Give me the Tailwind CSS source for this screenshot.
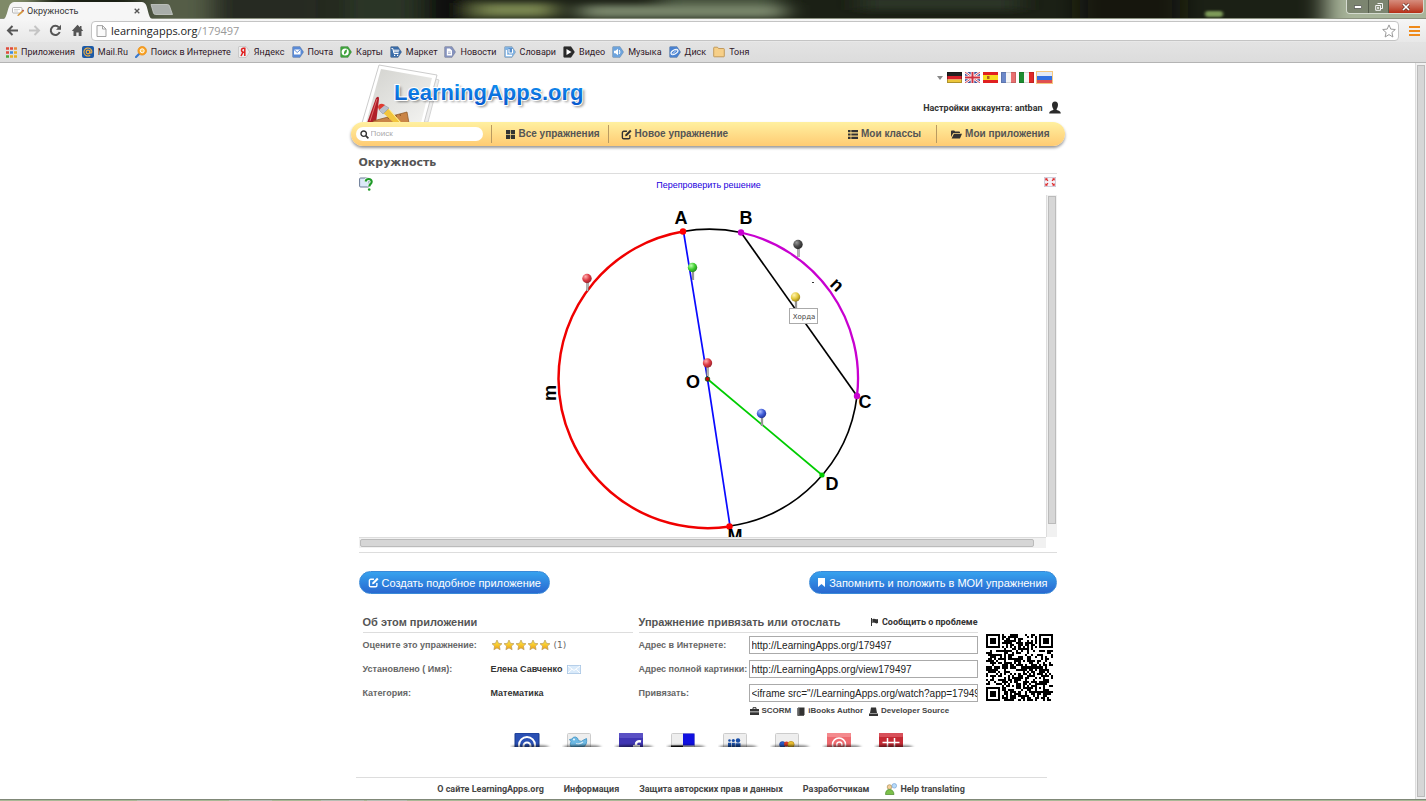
<!DOCTYPE html>
<html lang="ru">
<head>
<meta charset="utf-8">
<title>Окружность</title>
<script src="https://cdn.jsdelivr.net/npm/@tailwindcss/browser@4"></script>
</head>
<body class="h-screen flex flex-col overflow-hidden bg-white font-['Liberation_Sans',Arial,sans-serif] text-[9px] leading-3 text-[#444]">

<svg width="0" height="0" class="absolute" aria-hidden="true">
  <defs>
    <linearGradient id="starFill" x1="0" y1="0" x2="0" y2="1"><stop offset="0" stop-color="#fff04a"/><stop offset="1" stop-color="#f0a010"/></linearGradient>
    <filter id="soft" x="-20%" y="-100%" width="140%" height="300%"><feGaussianBlur stdDeviation="12 3"/></filter>
    <filter id="soft1" x="-20%" y="-50%" width="140%" height="200%"><feGaussianBlur stdDeviation="1.5 .8"/></filter>
    <radialGradient id="ballRed" cx=".35" cy=".3" r=".8"><stop offset="0" stop-color="#ffb0b0"/><stop offset=".5" stop-color="#dd3a44"/><stop offset="1" stop-color="#8a2028"/></radialGradient>
    <radialGradient id="ballGreen" cx=".35" cy=".3" r=".8"><stop offset="0" stop-color="#c0ffb0"/><stop offset=".5" stop-color="#3fcf30"/><stop offset="1" stop-color="#1f7a1c"/></radialGradient>
    <radialGradient id="ballBlack" cx=".35" cy=".3" r=".8"><stop offset="0" stop-color="#999"/><stop offset=".5" stop-color="#4a4a4a"/><stop offset="1" stop-color="#222"/></radialGradient>
    <radialGradient id="ballYellow" cx=".35" cy=".3" r=".8"><stop offset="0" stop-color="#fff3b0"/><stop offset=".5" stop-color="#e3c83c"/><stop offset="1" stop-color="#8a7418"/></radialGradient>
    <radialGradient id="ballBlue" cx=".35" cy=".3" r=".8"><stop offset="0" stop-color="#b0c0ff"/><stop offset=".5" stop-color="#3f5cd8"/><stop offset="1" stop-color="#1c2c88"/></radialGradient>
    <symbol id="tagShape" viewBox="0 0 12 12"><path d="M1.500 .5H8L11.700 6 8 11.500H1.500a1 1 0 0 1-1-1V1.500a1 1 0 0 1 1-1z" stroke="#00000033" stroke-width=".6"/></symbol>
    <symbol id="star" viewBox="0 0 12 12"><path d="M6 1l1.500 3.300 3.500.4-2.600 2.400.7 3.600L6 8.900l-3.100 1.800.7-3.600L1 4.700l3.500-.4z" fill="url(#starFill)" stroke="#b99a5a" stroke-width=".7"/></symbol>
    <symbol id="edit" viewBox="0 0 12 12"><path d="M9.700 6.500V9.200a1.500 1.500 0 0 1-1.500 1.500H3A1.500 1.500 0 0 1 1.500 9.200V4A1.500 1.500 0 0 1 3 2.500h3.500" fill="none" stroke="currentColor" stroke-width="1.500"/><path d="M4.500 8l.3-2.100L9.900.8l1.600 1.600-5.100 5.200z" fill="currentColor"/></symbol>
  </defs>
</svg>

<!-- Window title bar with tab -->
<header class="relative h-[19px] shrink-0 flex bg-[#1b2015] overflow-hidden">
  <svg class="absolute inset-0 size-full" viewBox="0 0 1426 19" preserveAspectRatio="none" aria-hidden="true">
    <g filter="url(#soft)">
      <rect x="-40" y="-15" width="80" height="50" fill="#7f8a68"/>
      <rect x="140" y="-15" width="80" height="50" fill="#545d46"/>
      <rect x="210" y="-15" width="120" height="50" fill="#272c22"/>
      <rect x="340" y="-15" width="80" height="50" fill="#2c3428"/>
      <rect x="430" y="-15" width="40" height="50" fill="#0c1008"/>
      <rect x="475" y="3" width="80" height="14" fill="#78844f"/>
      <rect x="580" y="5" width="205" height="13" fill="#78856a"/>
      <rect x="660" y="-4" width="120" height="10" fill="#4c5842"/>
      <rect x="860" y="-4" width="160" height="14" fill="#2b3426"/>
      <rect x="1080" y="-15" width="100" height="50" fill="#141910"/>
      <rect x="1325" y="-15" width="150" height="50" fill="#a8b49a"/>
    </g>
    <rect x="1205" y="11" width="18" height="6" rx="3" fill="#7d9a58" filter="url(#soft1)"/>
    <rect y="18" width="1426" height="1" fill="#8a917f"/>
  </svg>
  <div class="relative ml-1 mt-0.5 w-[148px] h-[17px] flex items-center pl-2 pr-3 gap-[3px]">
    <svg class="absolute inset-0 size-full" viewBox="0 0 148 17" preserveAspectRatio="none"><path d="M0 17C3 16 4 3 7 1.500Q8 0 10 0H138Q140 0 141 1.500C144 4 144 16 148 17z" fill="#f6f6f6"/></svg>
    <svg class="relative size-3" viewBox="0 0 12 12"><rect x=".5" y="2.500" width="9.500" height="5.500" rx="1" fill="#fff" stroke="#999" stroke-width=".7"/><path d="M2 4.500h6M2 6h4" stroke="#bbb" stroke-width=".6"/><path d="M5 10.500l5-5 1.500 1.200-5 4.300z" fill="#d79a3c"/><path d="M10 5.500l1-1 1 1-.7 1.200z" fill="#b04030"/></svg>
    <h2 class="relative text-[9px] text-[#333] font-['Roboto',sans-serif]">Окружность</h2>
    <button class="relative ml-auto text-[#555]" aria-label="Закрыть вкладку"><svg class="size-1.5" viewBox="0 0 6 6"><path d="M.7.7l4.600 4.600M5.300.7L.7 5.300" stroke="currentColor" stroke-width="1.300"/></svg></button>
  </div>
  <button class="relative self-start mt-1 -ml-0.5" aria-label="Новая вкладка"><svg class="w-[23px] h-[11px]" viewBox="0 0 23 11"><path d="M1 .5H17.500q1.500 0 2 1.500L22.500 10.500H5.500Q4 10.500 3.500 9z" fill="#a9aeaa" stroke="#c9cdc9" stroke-width=".8"/></svg></button>
  <div class="relative ml-auto mr-0.5 h-[14px] flex rounded-b border border-t-0 border-[#d5dbd0] overflow-hidden">
    <button class="w-[22px] bg-[#7c8570] border-r border-[#555d4d] flex justify-center items-center" aria-label="Свернуть"><svg class="w-2 h-1" viewBox="0 0 8 4"><rect x=".4" y=".7" width="7.200" height="2.600" fill="#fff" stroke="#444" stroke-width=".6"/></svg></button>
    <button class="w-[20px] bg-[#7c8570] border-r border-[#555d4d] flex justify-center items-center" aria-label="Развернуть"><svg class="size-2" viewBox="0 0 8 8"><path d="M2.500.5h5v5h-2M.7 2.500h4.800v4.800H.7zM2.500 4.300h1.200v1.200H2.500z" fill="none" stroke="#f5f5f5" stroke-width="1"/></svg></button>
    <button class="w-[34px] bg-linear-to-b from-[#d68d7d] to-[#b52c12] flex justify-center items-center" aria-label="Закрыть"><svg class="size-2" viewBox="0 0 8 8"><path d="M1 1l6 6M7 1L1 7" stroke="#5a2a20" stroke-width="2.800"/><path d="M1 1l6 6M7 1L1 7" stroke="#fff" stroke-width="1.700"/></svg></button>
  </div>
</header>

<!-- Address bar -->
<div class="h-[23px] shrink-0 bg-linear-to-b from-[#f6f6f6] to-[#e8e8e8] flex items-center pl-1.5 pr-1.5">
  <button class="text-[#555]" aria-label="Назад"><svg class="size-[13px]" viewBox="0 0 13 13"><path d="M6.500 2L2 6.500 6.500 11M2.500 6.500H12" fill="none" stroke="currentColor" stroke-width="2"/></svg></button>
  <button class="ml-[9px] text-[#c4c4c4]" aria-label="Вперёд"><svg class="size-[13px]" viewBox="0 0 13 13"><path d="M6.500 2L11 6.500 6.500 11M10.500 6.500H1" fill="none" stroke="currentColor" stroke-width="2"/></svg></button>
  <button class="ml-2 text-[#555]" aria-label="Обновить"><svg class="size-[13px]" viewBox="0 0 13 13"><path d="M10.700 8A4.600 4.600 0 1 1 9.800 3.300" fill="none" stroke="currentColor" stroke-width="2"/><path d="M12 .8v5H7z" fill="currentColor"/></svg></button>
  <button class="ml-[9px] text-[#555]" aria-label="Домой"><svg class="size-[13px]" viewBox="0 0 13 13"><path d="M6.500.8L.8 7h1.700v5h2.800V8.500h2.400V12h2.800V7h1.700L10.500 4.800V2H9v1.300z" fill="currentColor"/></svg></button>
  <label class="ml-[7px] flex-1 h-5 bg-white border border-[#c4c4c4] rounded-sm flex items-center pl-1 pr-0.5">
    <svg class="w-[11px] h-3" viewBox="0 0 11 12"><path d="M1 .6h5.500L10 4v7.500H1zM6.500.6V4H10" fill="#fafafa" stroke="#999" stroke-width=".9"/></svg>
    <span class="ml-1 flex-1 text-[11px] font-['Open_Sans',sans-serif] text-[#222]">learningapps.org<span class="text-[#999]">/179497</span></span>
    <svg class="size-[14px]" viewBox="0 0 14 14"><path d="M7 .9l1.800 4.200 4.500.4-3.400 3 1 4.500L7 10.600 3.100 13l1-4.500-3.400-3 4.500-.4z" fill="#fff" stroke="#999"/></svg>
  </label>
  <button class="ml-[10px]" aria-label="Меню"><svg class="w-[11px] h-3" viewBox="0 0 11 12"><path d="M0 2h11M0 6h11M0 10h11" stroke="#ef8a1a" stroke-width="2.200"/></svg></button>
</div>

<!-- Bookmarks -->
<nav class="h-[21px] shrink-0 bg-linear-to-b from-[#e3e3e3] to-[#dcdcdc] border-b border-[#b4b4b4] flex items-center gap-[7px] pl-1.5 text-[9px] text-[#301828] font-['Roboto',sans-serif]" aria-label="Закладки">
  <a href="#" class="flex items-center gap-1"><svg class="size-[11px]" viewBox="0 0 11 11"><path d="M0 1.500h3M0 5.500h3" stroke="#e04a3a" stroke-width="2.500"/><path d="M4 1.500h3" stroke="#e04a3a" stroke-width="2.500"/><path d="M8 1.500h3" stroke="#e88a3a" stroke-width="2.500"/><path d="M4 5.500h3" stroke="#3a8ae0" stroke-width="2.500"/><path d="M8 5.500h3M4 9.500h3M8 9.500h3" stroke="#e8b020" stroke-width="2.500"/><path d="M0 9.500h3" stroke="#4aa83a" stroke-width="2.500"/></svg>Приложения</a>
  <a href="#" class="flex items-center gap-1"><svg class="size-3" viewBox="0 0 12 12"><rect width="12" height="12" rx="2" fill="#1d5aa6"/><circle cx="6" cy="6" r="1.800" fill="none" stroke="#f5b040" stroke-width="1.200"/><path d="M7.900 4v2.600q1.600 1.200 2-.6A4 4 0 1 0 8.200 9.300" fill="none" stroke="#f5b040" stroke-width="1.100"/></svg>Mail.Ru</a>
  <a href="#" class="flex items-center gap-1"><svg class="size-3" viewBox="0 0 12 12"><path d="M1 11l3-3" stroke="#3a7ad0" stroke-width="2.200" stroke-linecap="round"/><circle cx="7.200" cy="4.800" r="4.300" fill="#f9a020" stroke="#e88a10" stroke-width=".7"/><circle cx="7.200" cy="4.800" r="2" fill="#fbc860" stroke="#fff"/></svg>Поиск в Интернете</a>
  <a href="#" class="flex items-center gap-1"><svg class="size-3" viewBox="0 0 12 12"><use href="#tagShape" fill="#ececec"/><path d="M6.800 10V2.200H5.500a1.800 1.800 0 0 0 0 4h1.300M5 6.200L3 10" fill="none" stroke="#e02020" stroke-width="1.500"/></svg>Яндекс</a>
  <a href="#" class="flex items-center gap-1"><svg class="size-3" viewBox="0 0 12 12"><use href="#tagShape" fill="#5a8ad6"/><path d="M2 3.500h6.500v5H2z" fill="#fff"/><path d="M2 3.500l3.200 3 3.300-3" fill="none" stroke="#5a8ad6"/></svg>Почта</a>
  <a href="#" class="flex items-center gap-1"><svg class="size-3" viewBox="0 0 12 12"><use href="#tagShape" fill="#3fa33c"/><circle cx="5.200" cy="6" r="3.600" fill="#fff"/><path d="M4 8.500Q3.500 4 7 3.500 7.200 7.500 4 8.500z" fill="#3fa33c"/></svg>Карты</a>
  <a href="#" class="flex items-center gap-1"><svg class="size-3" viewBox="0 0 12 12"><use href="#tagShape" fill="#3a6ca8"/><path d="M1.500 2.500h1.300L4 7.500h4.500M3.500 4.200h5.800M3.800 5.800h5" fill="none" stroke="#fff"/><path d="M4 9.300h1.200M7 9.300h1.200" stroke="#fff" stroke-width="1.200"/></svg>Маркет</a>
  <a href="#" class="flex items-center gap-1"><svg class="size-3" viewBox="0 0 12 12"><use href="#tagShape" fill="#8592bd"/><path d="M2.800 2.500h3L8 4.500v5H2.800z" fill="#fff"/><path d="M4 6h2.800M4 7.500h2.800" stroke="#8592bd" stroke-width=".7"/></svg>Новости</a>
  <a href="#" class="flex items-center gap-1"><svg class="size-3" viewBox="0 0 12 12"><use href="#tagShape" fill="#82b3e2"/><path d="M4.500 2h4v5.500h-4z" fill="#5a90cc"/><path d="M2.500 4v5.500H8" fill="none" stroke="#fff" stroke-width="1.300"/><path d="M5 3v4h3.500V3" fill="none" stroke="#fff"/></svg>Словари</a>
  <a href="#" class="flex items-center gap-1"><svg class="size-3" viewBox="0 0 12 12"><use href="#tagShape" fill="#2a2a2a"/><path d="M3.500 3l5 3-5 3z" fill="#fff"/></svg>Видео</a>
  <a href="#" class="flex items-center gap-1"><svg class="size-3" viewBox="0 0 12 12"><use href="#tagShape" fill="#6da3dc"/><path d="M2 4.700h1.500L6 2.800v6.400L3.500 7.300H2z" fill="#fff"/><path d="M7.200 4q1.500 2 0 4" fill="none" stroke="#fff"/></svg>Музыка</a>
  <a href="#" class="flex items-center gap-1"><svg class="size-3" viewBox="0 0 12 12"><use href="#tagShape" fill="#4a82d0"/><ellipse cx="5.500" cy="6" rx="3.800" ry="2" transform="rotate(-30 5.500 6)" fill="none" stroke="#fff" stroke-width="1.100"/><path d="M3 8.500l5-5" stroke="#cfe2ff"/></svg>Диск</a>
  <a href="#" class="flex items-center gap-1"><svg class="size-3" viewBox="0 0 12 12"><path d="M.7 3V2q0-.8.8-.8h3L5.500 2.500h5q.8 0 .8.800v6.900q0 .6-.6.600H1.300q-.6 0-.6-.6z" fill="#f6cf88" stroke="#b88a45" stroke-width=".8"/></svg>Тоня</a>
</nav>

<!-- Page viewport -->
<div class="flex-1 min-h-0 flex">
  <div class="flex-1 min-w-0 overflow-hidden flex flex-col">
    <div class="w-full max-w-[698px] mx-auto flex flex-col">

      <div class="h-[59px] flex justify-between items-start">
        <a href="#" class="relative block" aria-label="LearningApps.org">
          <svg class="w-[240px] h-[59px]" viewBox="359 63 240 59">
            <defs><linearGradient id="logoText" gradientUnits="userSpaceOnUse" x1="0" y1="82" x2="0" y2="106"><stop offset="0" stop-color="#1193f2"/><stop offset="1" stop-color="#0756cc"/></linearGradient>
            <linearGradient id="paper" x1="0" y1="0" x2="1" y2="1"><stop offset="0" stop-color="#d2d2ce"/><stop offset="1" stop-color="#f4f4f2"/></linearGradient></defs>
            <path d="M436 79l3 1-11 42h-6z" fill="#eee" stroke="#ccc" stroke-width=".8"/>
            <path d="M379 65l58 10-13 48-62 0z" fill="#fff" stroke="#ccc"/>
            <path d="M381 69l51 9-11 45h-55z" fill="url(#paper)"/>
            <path d="M376 98q3-3 3 1l-3 24h-9z" fill="#b01e28"/><path d="M377 99l-7 22" stroke="#e06a6a"/>
            <path d="M373 121l34-9 2 11h-36z" fill="#c98547" stroke="#8a5420" stroke-width=".7"/>
            <path d="M388 117l.5 2M392 116l.5 2M396 115l.5 2M400 114l.5 2" stroke="#7a4818" stroke-width=".7"/>
            <path d="M387 107l14 15h-8l-11-10z" fill="#f2c53d"/><path d="M388 108l12 14" stroke="#fff0a0"/>
            <path d="M384 105l-5 5 4 4 6-6z" fill="#b9c0cc" stroke="#8890a0" stroke-width=".5"/><path d="M378 107q1-4 5-3l2 1-6 5z" fill="#e03a30"/>
            <text x="396" y="102" font-family="Liberation Sans" font-weight="700" font-size="22" fill="#00000077" filter="url(#soft1)">LearningApps.org</text>
            <text x="394" y="100" font-family="Liberation Sans" font-weight="700" font-size="22" fill="url(#logoText)" stroke="#fff" stroke-width="2" paint-order="stroke">LearningApps.org</text>
          </svg>
        </a>
        <div class="flex flex-col items-end pt-2">
          <div class="flex items-center gap-[3px] pr-1">
            <svg class="w-[6px] h-1 mr-px" viewBox="0 0 6 4"><path d="M0 0h6L3 4z" fill="#888"/></svg>
            <a href="#" aria-label="Deutsch"><svg class="w-[15px] h-[11px]" viewBox="0 0 15 11"><rect width="15" height="4" fill="#222"/><rect y="4" width="15" height="3.500" fill="#d8202a"/><rect y="7.500" width="15" height="3.500" fill="#ecc63a"/><rect x=".5" y=".5" width="14" height="10" fill="none" stroke="#0004"/></svg></a>
            <a href="#" aria-label="English"><svg class="w-[15px] h-[11px]" viewBox="0 0 15 11"><rect width="15" height="11" fill="#3a4f9c"/><path d="M0 0l15 11M15 0L0 11" stroke="#fff" stroke-width="2.600"/><path d="M0 0l15 11M15 0L0 11" stroke="#d03040" stroke-width=".9"/><path d="M7.500 0v11M0 5.500h15" stroke="#fff" stroke-width="3.600"/><path d="M7.500 0v11M0 5.500h15" stroke="#d03040" stroke-width="2"/></svg></a>
            <a href="#" aria-label="Español"><svg class="w-[15px] h-[11px]" viewBox="0 0 15 11"><rect width="15" height="11" fill="#e02020"/><rect y="3" width="15" height="5" fill="#f8dc20"/><rect x="4" y="4" width="2.500" height="3" fill="#b06020"/></svg></a>
            <a href="#" aria-label="Français"><svg class="w-[15px] h-[11px]" viewBox="0 0 15 11"><rect width="5" height="11" fill="#6c88c8"/><rect x="5" width="5" height="11" fill="#f6f6f6"/><rect x="10" width="5" height="11" fill="#e87070"/><rect x=".5" y=".5" width="14" height="10" fill="none" stroke="#0002"/></svg></a>
            <a href="#" aria-label="Italiano"><svg class="w-[15px] h-[11px]" viewBox="0 0 15 11"><rect width="5" height="11" fill="#1c8c30"/><rect x="5" width="5" height="11" fill="#f6f6f6"/><rect x="10" width="5" height="11" fill="#e02828"/><rect x=".5" y=".5" width="14" height="10" fill="none" stroke="#0002"/></svg></a>
            <a href="#" aria-label="Русский" class="border border-[#f5c880] -ml-px"><svg class="w-[15px] h-[11px]" viewBox="0 0 15 11"><rect width="15" height="4" fill="#e4eaf6"/><rect y="4" width="15" height="4" fill="#3470e0"/><rect y="8" width="15" height="3" fill="#e05050"/></svg></a>
          </div>
          <a href="#" class="mt-[17px] flex items-center gap-1.5 font-bold text-[#333] text-[9px] font-['Roboto',sans-serif] -mr-1">Настройки аккаунта: antban
            <svg class="w-3 h-[13px]" viewBox="0 0 12 13"><path d="M6 .5c2 0 3 1.300 3 3.200S8 7.500 7.600 8v.8c.6.800 4.200.9 4.200 3.700H.2C.2 9.700 3.800 9.600 4.400 8.800V8C4 7.500 3 5.600 3 3.700S4 .5 6 .5z" fill="#2a2a2a"/></svg>
          </a>
        </div>
      </div>

      <nav class="-mx-2 h-6 rounded-full bg-linear-to-b from-[#fff0a0] to-[#ffcb72] shadow-[0_2px_3px_#0006] flex items-center pl-[5px] pr-[15px] text-[10px] font-bold text-[#555]" aria-label="Главное меню">
        <label class="w-[127px] h-3.5 bg-white rounded-full flex items-center pl-1 gap-0.5">
          <svg class="size-[9px] shrink-0" viewBox="0 0 9 9"><circle cx="3.700" cy="3.700" r="2.700" fill="none" stroke="#333" stroke-width="1.400"/><path d="M5.700 5.700l2.700 2.700" stroke="#333" stroke-width="1.700"/></svg>
          <input type="text" placeholder="Поиск" aria-label="Поиск" class="w-full min-w-0 text-[8px] font-normal outline-none placeholder:text-[#aaa]">
        </label>
        <span class="ml-2 w-px h-[18px] bg-[#b99a60]"></span>
        <a href="#" class="ml-3.5 flex items-center gap-1"><svg class="size-[9px]" viewBox="0 0 9 9"><path d="M0 0h4.200v4H0zM4.900 0H9v4H4.900zM0 4.700h4.200V9H0zM4.900 4.700H9V9H4.900z" fill="#333"/></svg>Все упражнения</a>
        <span class="ml-2 w-px h-[18px] bg-[#b99a60]"></span>
        <a href="#" class="ml-3 flex items-center gap-[3px]"><svg class="size-[11px] text-[#333]" viewBox="0 0 12 12"><use href="#edit"/></svg>Новое упражнение</a>
        <a href="#" class="ml-auto flex items-center gap-[3px]"><svg class="w-[10px] h-[9px]" viewBox="0 0 9 8"><path d="M0 0h2.300v2H0zM3 0h6v2H3zM0 3h2.300v2H0zM3 3h6v2H3zM0 6h2.300v2H0zM3 6h6v2H3z" fill="#333"/></svg>Мои классы</a>
        <span class="ml-[15px] w-px h-[18px] bg-[#b99a60]"></span>
        <a href="#" class="ml-3.5 flex items-center gap-[3px]"><svg class="w-[11px] h-[9px]" viewBox="0 0 11 9"><path d="M0 7V1.300Q0 .5.800.5h2.400l.9 1h4q.9 0 .9.900V3H3Q2.200 3 1.800 3.800z" fill="#333"/><path d="M3 3.800h8L9.200 8q-.2.500-.7.500H.6z" fill="#333"/></svg>Мои приложения</a>
      </nav>

      <h1 class="mt-[11px] h-[17px] border-b border-[#ddd] font-bold text-[11px] text-[#555] font-['DejaVu_Sans',sans-serif]">Окружность</h1>

      <div class="h-[21px] flex items-start justify-between">
        <button class="mt-[3px]" aria-label="Помощь"><svg class="size-[14px]" viewBox="0 0 14 14"><rect x=".6" y="1" width="9.500" height="9" rx="1" fill="#dbe9f8" stroke="#5a6a88" stroke-width=".9"/><path d="M6.500 4.500Q7 2 9.700 2T12.700 4.700C12.700 7 10.300 6.800 10.300 9.500" fill="none" stroke="#fff" stroke-width="3.500"/><path d="M6.500 4.500Q7 2 9.700 2T12.700 4.700C12.700 7 10.300 6.800 10.300 9.500" fill="none" stroke="#1f9a28" stroke-width="2.100"/><circle cx="10.200" cy="12.500" r="1.300" fill="#1f9a28"/></svg></button>
        <a href="#" class="mt-[5px] text-[9px] text-[#2200dd]">Перепроверить решение</a>
        <button class="mt-[3px]" aria-label="На весь экран"><svg class="w-3 h-[10px]" viewBox="0 0 12 10"><rect x=".4" y=".4" width="11.200" height="9.200" fill="#f4f2f8" stroke="#c8c4d4" stroke-width=".8"/><path d="M2 2L4 3.800M10 2L8 3.800M2 8L4 6.200M10 8L8 6.200" stroke="#dd2a2a" stroke-width="1.300"/><path d="M1.500 3.500V1.500h2M10.500 3.500V1.500h-2M1.500 6.500v2h2M10.500 6.500v2h-2" fill="none" stroke="#dd2a2a" stroke-width=".7"/></svg></button>
      </div>

      <!-- Exercise canvas -->
      <section class="border-b border-[#ddd] pb-1" aria-label="Упражнение">
        <div class="flex">
          <div class="flex-1 min-w-0 h-[342px] overflow-hidden">
            <svg class="w-full h-full" viewBox="359 195 687 342">
              <g fill="none">
                <path d="M683 231.500A149.500 149.500 0 0 1 741 232.500" stroke="#000" stroke-width="1.700"/>
                <path d="M857 396A149.500 149.500 0 0 1 730 526" stroke="#000" stroke-width="1.700"/>
                <path d="M741 232.500L857 396" stroke="#000" stroke-width="1.700"/>
                <path d="M741 232.500A149.500 149.500 0 0 1 857 396" stroke="#c800d0" stroke-width="2.300"/>
                <path d="M683 231.500A149.500 149.500 0 0 0 558.500 379 149.500 149.500 0 0 0 730 526.500" stroke="#f00000" stroke-width="2.500"/>
                <path d="M683.500 231.500L707.500 379 730 526" stroke="#0a0aff" stroke-width="1.700"/>
                <path d="M707.500 379L822 475" stroke="#0c0" stroke-width="1.700"/>
              </g>
              <circle cx="683" cy="231.500" r="3.200" fill="#f00"/><circle cx="729.500" cy="526.500" r="3.200" fill="#f00"/>
              <circle cx="741" cy="232.500" r="3.200" fill="#c800d0"/><circle cx="857" cy="396" r="3.200" fill="#c800d0"/>
              <circle cx="822" cy="475" r="2.600" fill="#0c0"/><circle cx="707.500" cy="379" r="2.300" fill="#c00000" stroke="#045a04" stroke-width=".8"/>
              <rect x="812" y="282" width="2" height="1" fill="#333"/>
              <g font-family="Liberation Sans" font-weight="700" font-size="18" fill="#000" text-anchor="middle">
                <text x="681" y="224">A</text><text x="746" y="224">B</text><text x="865" y="408">C</text><text x="832" y="490">D</text><text x="693" y="388">O</text><text x="735" y="542">M</text>
                <text x="0" y="0" transform="translate(556 393) rotate(-90)">m</text>
                <text x="0" y="0" transform="translate(833 289) rotate(45)">n</text>
              </g>
              <g stroke="#777" stroke-width="2.200"><path d="M587.500 282v9M693 271v9M798.500 249v8M796 301v8M707.500 367v9M762 417v9"/></g>
              <g stroke="#ddd" stroke-width=".6"><path d="M587.500 282v9M693 271v9M798.500 249v8M796 301v8M707.500 367v9M762 417v9"/></g>
              <circle cx="587" cy="278.500" r="4.700" fill="url(#ballRed)"/><circle cx="692.500" cy="267.500" r="4.700" fill="url(#ballGreen)"/>
              <circle cx="798" cy="244.500" r="4.700" fill="url(#ballBlack)"/><circle cx="795.500" cy="297" r="4.700" fill="url(#ballYellow)"/>
              <circle cx="707.500" cy="363" r="4.700" fill="url(#ballRed)"/><circle cx="761.500" cy="413.500" r="4.700" fill="url(#ballBlue)"/>
              <rect x="789.500" y="308.500" width="28" height="15" fill="#fff" stroke="#aaa"/>
              <text x="804" y="319" font-family="DejaVu Sans" font-size="7" fill="#444" text-anchor="middle">Хорда</text>
            </svg>
          </div>
          <div class="w-[11px] bg-[#f1f1f1] border-l border-[#ddd] p-px pb-[13px]"><div class="h-full bg-[#d6d6d6] border border-[#bbb]"></div></div>
        </div>
        <div class="mr-[11px] h-[11px] bg-[#f1f1f1] border-t border-[#ddd] py-px pl-px pr-3"><div class="h-[8px] bg-[#d6d6d6] border border-[#bbb] rounded-xs"></div></div>
      </section>

      <div class="mt-[18px] flex justify-between text-[11px] text-white">
        <button class="h-[23px] rounded-full bg-linear-to-b from-[#37a2ee] to-[#2a68d0] border border-[#3a8ad8] flex items-center px-2 gap-[3px]"><svg class="size-[11px]" viewBox="0 0 12 12"><use href="#edit"/></svg>Создать подобное приложение</button>
        <button class="h-[23px] rounded-full bg-linear-to-b from-[#37a2ee] to-[#2a68d0] border border-[#3a8ad8] flex items-center px-2 gap-1"><svg class="w-[7px] h-[9px]" viewBox="0 0 7 9"><path d="M0 0h7v9L3.500 6 0 9z" fill="#fff"/></svg>Запомнить и положить в МОИ упражнения</button>
      </div>

      <!-- App details -->
      <div class="mt-[22px] ml-1 mr-1 flex items-start text-[9px] font-bold text-[#666]">
        <section class="w-[270px]">
          <h2 class="h-[17px] border-b border-[#ddd] text-[11px] text-[#555]">Об этом приложении</h2>
          <dl class="grid grid-cols-[128px_1fr] auto-rows-[24px] items-center text-[9px]">
            <dt>Оцените это упражнение:</dt>
            <dd class="flex items-center"><svg class="size-3" viewBox="0 0 12 12"><use href="#star"/></svg><svg class="size-3" viewBox="0 0 12 12"><use href="#star"/></svg><svg class="size-3" viewBox="0 0 12 12"><use href="#star"/></svg><svg class="size-3" viewBox="0 0 12 12"><use href="#star"/></svg><svg class="size-3" viewBox="0 0 12 12"><use href="#star"/></svg><span class="ml-[3px] text-[9px] font-normal font-['DejaVu_Sans',sans-serif]">(1)</span></dd>
            <dt>Установлено ( Имя):</dt>
            <dd class="flex items-center gap-[5px] text-[#333]"><a href="#">Елена Савченко</a><svg class="w-[14px] h-[9px]" viewBox="0 0 14 9"><rect x=".4" y=".4" width="13.200" height="8.200" fill="#d9eafa" stroke="#a9c6e4" stroke-width=".8"/><path d="M1 1l6 4.500L13 1M1 8l4-3.800M13 8L9 4.200" fill="none" stroke="#fff"/></svg></dd>
            <dt>Категория:</dt>
            <dd class="text-[#333]">Математика</dd>
          </dl>
        </section>
        <section class="ml-1.5 flex-1 min-w-0">
          <div class="h-[17px] border-b border-[#ddd] flex justify-between items-start">
            <h2 class="text-[11px] text-[#555]">Упражнение привязать или отослать</h2>
            <a href="#" class="flex items-center gap-1 text-[#333] font-['Roboto',sans-serif]"><svg class="w-[7px] h-2" viewBox="0 0 7 8"><path d="M.5 0v8" stroke="#333"/><path d="M1.300 1Q3 .3 4.300 1T7 1v4Q5.500 5.800 4.200 5T1.300 5z" fill="#333"/></svg>Сообщить о проблеме</a>
          </div>
          <div class="grid grid-cols-[110px_1fr] auto-rows-[24px] items-center text-[9px]">
            <label for="u1" class="whitespace-nowrap">Адрес в Интернете:</label><input id="u1" readonly value="http://LearningApps.org/179497" class="h-[18px] min-w-0 border border-[#aaa] pl-0.5 text-[10px] font-normal text-[#222]">
            <label for="u2" class="whitespace-nowrap">Адрес полной картинки:</label><input id="u2" readonly value="http://LearningApps.org/view179497" class="h-[18px] min-w-0 border border-[#aaa] pl-0.5 text-[10px] font-normal text-[#222]">
            <label for="u3" class="whitespace-nowrap">Привязать:</label><input id="u3" readonly value="&lt;iframe src=&quot;//LearningApps.org/watch?app=179497&quot;&gt;&lt;/iframe&gt;" class="h-[18px] min-w-0 border border-[#aaa] pl-0.5 text-[10px] font-normal text-[#222]">
          </div>
          <div class="ml-[111px] h-3 flex items-center gap-1.5 text-[8px] text-[#444]">
            <a href="#" class="flex items-center gap-[3px]"><svg class="w-[9px] h-2" viewBox="0 0 9 8"><path d="M3 2V.7h3V2" fill="none" stroke="#333"/><path d="M0 2h9v2.500H0zM0 5.200h9V8H0z" fill="#333"/></svg>SCORM</a>
            <a href="#" class="flex items-center gap-[3px]"><svg class="w-2 h-[9px]" viewBox="0 0 8 9"><path d="M1 .5h6.500V8H1z" fill="#333"/><path d="M.7 1v7.500H7" fill="none" stroke="#333" stroke-width=".8"/><path d="M1.800 1v7" stroke="#aaa" stroke-width=".6"/></svg>iBooks Author</a>
            <a href="#" class="flex items-center gap-[3px]"><svg class="w-[9px] h-[9px]" viewBox="0 0 9 9"><path d="M2 .5h5L8 6H1zM0 6.600h9V9H0z" fill="#333"/></svg>Developer Source</a>
          </div>
        </section>
        <svg id="qr" class="ml-2 mt-[18px] size-[67px] shrink-0" viewBox="0 0 33 33" shape-rendering="crispEdges" role="img" aria-label="QR-код"></svg>
      </div>

      <!-- Share -->
      <div class="mt-4 ml-[151px] flex gap-2">
        <a href="#" aria-label="E-mail"><svg class="w-11 h-3.5" viewBox="0 0 44 14"><rect x="5" width="24" height="24" rx="1" fill="#2a50b4" stroke="#17388c"/><circle cx="17" cy="13" r="3.500" fill="none" stroke="#fff" stroke-width="2"/><circle cx="17" cy="12" r="8" fill="none" stroke="#fff" stroke-width="2"/><ellipse cx="20" cy="14" rx="19" ry="2" fill="#0008" filter="url(#soft1)"/></svg></a>
        <a href="#" aria-label="Twitter"><svg class="w-11 h-3.5" viewBox="0 0 44 14"><rect x="5.500" y=".5" width="23" height="24" rx="1" fill="#eee" stroke="#ccc"/><path d="M7.500 6.500l2.500-.5q1-2.500 3.500-2t3 3.500q3 2 5-.5l3-1.500q1 6-3 8.500H9Q7.500 11 9 8.500z" fill="#6db9e4" stroke="#3f8fc0" stroke-width=".8"/><circle cx="12" cy="6.500" r=".9" fill="#fff"/><path d="M14 10.500q4 1 7-1.500" fill="none" stroke="#d8ecf8" stroke-width="1.200"/><ellipse cx="20" cy="14" rx="19" ry="2" fill="#0008" filter="url(#soft1)"/></svg></a>
        <a href="#" aria-label="Facebook"><svg class="w-11 h-3.5" viewBox="0 0 44 14"><rect x="5" width="24" height="24" rx="1" fill="#4036b4"/><rect x="5" width="24" height="5" rx="1" fill="#5a50c4"/><path d="M27 8.500q-5-1-5 3V14M19 13.200h7" fill="none" stroke="#fff" stroke-width="2.500"/><ellipse cx="20" cy="14" rx="19" ry="2" fill="#0008" filter="url(#soft1)"/></svg></a>
        <a href="#" aria-label="Delicious"><svg class="w-11 h-3.5" viewBox="0 0 44 14"><rect x="5.500" y=".5" width="23" height="24" rx="1" fill="#eee" stroke="#ccc"/><rect x="17" y=".5" width="11.500" height="12" fill="#1010e0"/><rect x="5" y="12.500" width="12" height="2" fill="#111"/><ellipse cx="20" cy="14" rx="19" ry="2" fill="#0008" filter="url(#soft1)"/></svg></a>
        <a href="#" aria-label="MySpace"><svg class="w-11 h-3.5" viewBox="0 0 44 14"><rect x="5.500" y=".5" width="23" height="24" rx="1" fill="#eee" stroke="#ccc"/><g fill="#1a4fa8"><circle cx="11.500" cy="7.500" r="1.300"/><circle cx="15.300" cy="7.500" r="1.600"/><circle cx="20" cy="7.500" r="2.200"/><path d="M10 9.800h3V14h-3zM13.700 9.800h3.200V14h-3.200zM17.500 10.300h5V14h-5z"/></g><ellipse cx="20" cy="14" rx="19" ry="2" fill="#0008" filter="url(#soft1)"/></svg></a>
        <a href="#" aria-label="Google"><svg class="w-11 h-3.5" viewBox="0 0 44 14"><rect x="5.500" y=".5" width="23" height="24" rx="1" fill="#eee" stroke="#ccc"/><circle cx="12.500" cy="11.500" r="3" fill="#2a5cc8" stroke="#1a3a88" stroke-width=".5"/><circle cx="16.500" cy="11" r="2.500" fill="#d83a2a"/><circle cx="21" cy="11.500" r="3.200" fill="#ecc030" stroke="#a88010" stroke-width=".5"/><ellipse cx="20" cy="14" rx="19" ry="2" fill="#0008" filter="url(#soft1)"/></svg></a>
        <a href="#" aria-label="Pinterest"><svg class="w-11 h-3.5" viewBox="0 0 44 14"><rect x="5" width="24" height="24" rx="1" fill="#ee6a70"/><rect x="5" width="24" height="4" rx="1" fill="#f48a8e"/><circle cx="17" cy="11.500" r="6.500" fill="none" stroke="#fff" stroke-width="1.500"/><path d="M15 13.500q-1-4.500 2.300-4.500t2.500 4" fill="none" stroke="#fff" stroke-width="1.500"/><ellipse cx="20" cy="14" rx="19" ry="2" fill="#0008" filter="url(#soft1)"/></svg></a>
        <a href="#" aria-label="Поделиться"><svg class="w-11 h-3.5" viewBox="0 0 44 14"><rect x="5" width="24" height="24" rx="1" fill="#c42a34"/><rect x="5" width="24" height="4" rx="1" fill="#d8505a"/><path d="M13.500 5v9M20.500 5v9M8.500 9.500h17" stroke="#fff" stroke-width="1.500"/><ellipse cx="20" cy="14" rx="19" ry="2" fill="#0008" filter="url(#soft1)"/></svg></a>
      </div>

      <footer class="mt-[30px] -ml-[3px] mr-2.5 border-t border-[#ddd] pt-[5px] flex justify-center gap-5 text-[9px] font-bold text-[#444] font-['Roboto',sans-serif]">
        <a href="#">О сайте LearningApps.org</a><a href="#">Информация</a><a href="#">Защита авторских прав и данных</a><a href="#">Разработчикам</a>
        <a href="#" class="-ml-1 flex items-center gap-[3px]"><svg class="size-3" viewBox="0 0 12 12"><circle cx="4.500" cy="4" r="2.300" fill="#f2cf9a" stroke="#a08040" stroke-width=".6"/><path d="M.5 11.500q0-5 4-5t4.500 5z" fill="#7cc04a" stroke="#4a8a28" stroke-width=".7"/><circle cx="9.300" cy="2.800" r="2.300" fill="#b8dafa" stroke="#6a9ad0" stroke-width=".6"/></svg>Help translating</a>
      </footer>
    </div>
  </div>
  <div class="w-[11px] bg-[#f1f1f1] border-l border-[#ddd] px-px pt-0.5 pb-0.5"><div class="h-full bg-[#d6d6d6] border border-[#bbb]"></div></div>
</div>

<!-- Taskbar edge -->
<div class="h-0.5 shrink-0 bg-[#aab896] border-t border-[#808878] flex pl-[137px]">
  <span class="w-[43px] bg-[#b8beb4]"></span><span class="ml-[49px] w-[43px] bg-[#b8beb4]"></span><span class="ml-[49px] w-[43px] bg-[#b8beb4]"></span><span class="ml-[3px] w-10 bg-[#b8beb4]"></span>
</div>

<script>
  // QR symbol: finder, timing and alignment patterns plus data modules
  (function () {
    var n = 33, seed = 179497, d = '';
    function rnd() { seed = (seed * 1103515245 + 12345) % 2147483648; return seed / 2147483648; }
    function ring(x, y, cx, cy, on) { return on.indexOf(Math.max(Math.abs(x - cx), Math.abs(y - cy))) >= 0; }
    for (var y = 0; y < n; y++) for (var x = 0; x < n; x++) {
      var v = rnd() < 0.5;
      if (x === 6 || y === 6) v = (x + y) % 2 === 0;
      if (Math.max(Math.abs(x - 26), Math.abs(y - 26)) <= 2) v = ring(x, y, 26, 26, [0, 2]);
      if (x < 8 && y < 8) v = ring(x, y, 3, 3, [0, 1, 3]);
      if (x > 24 && y < 8) v = ring(x, y, 29, 3, [0, 1, 3]);
      if (x < 8 && y > 24) v = ring(x, y, 3, 29, [0, 1, 3]);
      if (v) d += 'M' + x + ' ' + y + 'h1v1h-1z';
    }
    var p = document.createElementNS('http://www.w3.org/2000/svg', 'path');
    p.setAttribute('d', d);
    document.getElementById('qr').appendChild(p);
  })();
</script>
</body>
</html>
